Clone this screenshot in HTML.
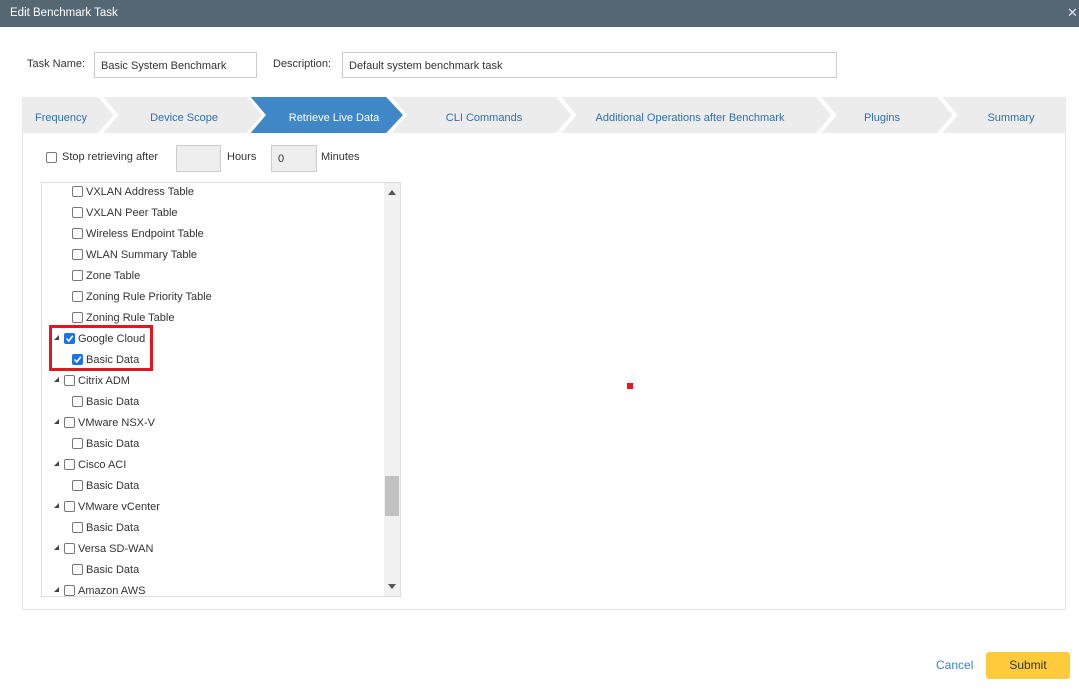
<!DOCTYPE html>
<html><head><meta charset="utf-8"><style>
*{box-sizing:border-box;margin:0;padding:0}
body{width:1079px;height:698px;background:#fff;font-family:"Liberation Sans",sans-serif;font-size:11px;color:#333;position:relative;overflow:hidden}
.abs{position:absolute}
.hdr{left:0;top:0;width:1079px;height:27px;background:#566774;color:#fff;font-size:11.5px;line-height:27px;padding-left:10px}
.inp{border:1px solid #ccc;height:26px;line-height:24px;padding-left:6px;font-size:11px;color:#333}
.panel{left:22px;top:133px;width:1044px;height:477px;border:1px solid #e2e2e2;border-top:none}
.cb{position:absolute;width:11px;height:11px;border:1px solid #777;border-radius:2px;background:#fff}
.cb.on{background:#1a73e8;border-color:#1a73e8}
.row{position:absolute;height:21px;line-height:21px;font-size:11px;color:#333;white-space:nowrap}
.tri{position:absolute;width:0;height:0;border-left:5px solid transparent;border-bottom:5px solid #444}
</style></head><body>
<div class="abs hdr">Edit Benchmark Task</div>
<div class="abs" style="left:1067px;top:5px;color:#dde3e8;font-size:13px">✕</div>
<div class="abs" style="left:27px;top:58px">Task Name:</div>
<div class="abs inp" style="left:94px;top:52px;width:163px;line-height:26px">Basic System Benchmark</div>
<div class="abs" style="left:273px;top:58px">Description:</div>
<div class="abs inp" style="left:342px;top:52px;width:495px;line-height:26px">Default system benchmark task</div>
<svg class="abs" style="left:22px;top:97px" width="1044" height="36">
<rect width="1044" height="36" fill="#ececec"/>
<polygon points="227,0 364,0 381,18 364,36 227,36 243,18" fill="#3f87c6"/>
<g fill="none" stroke="#fff" stroke-width="4">
<polyline points="77,-2 94,18 77,38"/>
<polyline points="535,-2 552,18 535,38"/>
<polyline points="795,-2 812,18 795,38"/>
<polyline points="916,-2 933,18 916,38"/>
</g>
<polyline points="225,-2 242,18 225,38" fill="none" stroke="#fff" stroke-width="3"/>
<polyline points="366,-2 383,18 366,38" fill="none" stroke="#fff" stroke-width="3"/>
<g font-family="Liberation Sans" font-size="11" fill="#2f6fa8" text-anchor="middle">
<text x="39" y="24">Frequency</text>
<text x="162" y="24">Device Scope</text>
<text x="312" y="24" fill="#fff">Retrieve Live Data</text>
<text x="462" y="24">CLI Commands</text>
<text x="668" y="24">Additional Operations after Benchmark</text>
<text x="860" y="24">Plugins</text>
<text x="989" y="24">Summary</text>
</g></svg>
<div class="abs panel"></div>
<div class="cb" style="left:46px;top:152px"></div>
<div class="abs" style="left:62px;top:151px">Stop retrieving after</div>
<div class="abs" style="left:176px;top:145px;width:45px;height:27px;background:#eee;border:1px solid #ccc"></div>
<div class="abs" style="left:227px;top:151px">Hours</div>
<div class="abs inp" style="left:271px;top:145px;width:46px;height:27px;background:#eee;line-height:27px">0</div>
<div class="abs" style="left:321px;top:151px">Minutes</div>
<div class="abs" style="left:41px;top:182px;width:360px;height:415px;border:1px solid #ddd;overflow:hidden">
<div class="abs" style="left:342px;top:0;width:17px;height:413px;background:#f1f1f1"></div>
<div class="abs" style="left:343px;top:293px;width:14px;height:40px;background:#c1c1c1"></div>
<div class="abs" style="left:346px;top:7px;border-left:4px solid transparent;border-right:4px solid transparent;border-bottom:5px solid #555;width:0;height:0"></div>
<div class="abs" style="left:346px;top:401px;border-left:4px solid transparent;border-right:4px solid transparent;border-top:5px solid #555;width:0;height:0"></div>
</div>
<div id="tree"></div>
<div class="abs" style="left:49px;top:325px;width:104px;height:46px;border:3px solid #e4161f"></div>
<div class="abs" style="left:627px;top:383px;width:6px;height:6px;background:#e4161f"></div>
<div class="abs" style="left:936px;top:658px;color:#3a7fc4;font-size:12px">Cancel</div>
<div class="abs" style="left:986px;top:652px;width:84px;height:27px;background:#ffcb3d;border-radius:3px;text-align:center;line-height:27px;font-size:12px;color:#333">Submit</div>
<script>
var items=[[1,"VXLAN Address Table"],[1,"VXLAN Peer Table"],[1,"Wireless Endpoint Table"],[1,"WLAN Summary Table"],[1,"Zone Table"],[1,"Zoning Rule Priority Table"],[1,"Zoning Rule Table"],[0,"Google Cloud",1],[1,"Basic Data",1],[0,"Citrix ADM"],[1,"Basic Data"],[0,"VMware NSX-V"],[1,"Basic Data"],[0,"Cisco ACI"],[1,"Basic Data"],[0,"VMware vCenter"],[1,"Basic Data"],[0,"Versa SD-WAN"],[1,"Basic Data"],[0,"Amazon AWS"]];
var h="";items.forEach(function(it,i){var cy=192+i*21;if(cy>596)return;var cbx=it[0]?72:64,tx=it[0]?86:78;
if(!it[0])h+='<div class="tri" style="left:54px;top:'+(cy-4)+'px"></div>';
h+='<div class="cb'+(it[2]?' on':'')+'" style="left:'+cbx+'px;top:'+(cy-6)+'px">'+(it[2]?'<svg width="9" height="9" style="position:absolute;left:0;top:0"><polyline points="1.5,4.5 3.8,7 7.8,1.8" fill="none" stroke="#fff" stroke-width="1.6"/></svg>':'')+'</div>';
h+='<div class="row" style="left:'+tx+'px;top:'+(cy-10)+'px">'+it[1]+'</div>';});
document.getElementById("tree").innerHTML=h;
</script>
</body></html>
